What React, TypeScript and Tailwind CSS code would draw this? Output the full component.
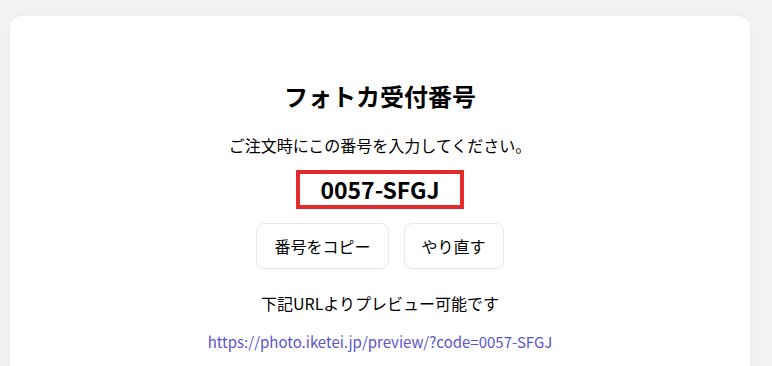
export default function App() {
  return (
    <div className="h-screen overflow-hidden bg-[#f2f2f2] pl-[10px] pr-[22px] pt-[16px] font-['Noto_Sans_CJK_JP','Noto_Sans',sans-serif] text-black">
      <div className="flex h-[400px] flex-col items-center rounded-xl bg-white pt-[64px] shadow-[0_0_4px_rgba(0,0,0,0.04)]">
        <h1 className="text-[24px] font-bold leading-[32px]">フォトカ受付番号</h1>
        <p className="mt-[21px] text-[16px] leading-[24px]">ご注文時にこの番号を入力してください。</p>
        <div className="mt-[13px] border-4 border-[#e32b2b] px-[20px] text-[23px] font-bold leading-[31px]">
          0057-SFGJ
        </div>
        <div className="mt-[14px] flex gap-[15px]">
          <button className="h-[46px] rounded-lg border border-gray-200 px-[17px] text-[16px]">番号をコピー</button>
          <button className="h-[46px] rounded-lg border border-gray-200 px-[17px] text-[16px]">やり直す</button>
        </div>
        <p className="mt-[22px] text-[16px] leading-[24px]">下記URLよりプレビュー可能です</p>
        <a href="#" className="mt-[15px] text-[15px] leading-[24px] text-[#5a55c9]">
          https://photo.iketei.jp/preview/?code=0057-SFGJ
        </a>
      </div>
    </div>
  );
}
